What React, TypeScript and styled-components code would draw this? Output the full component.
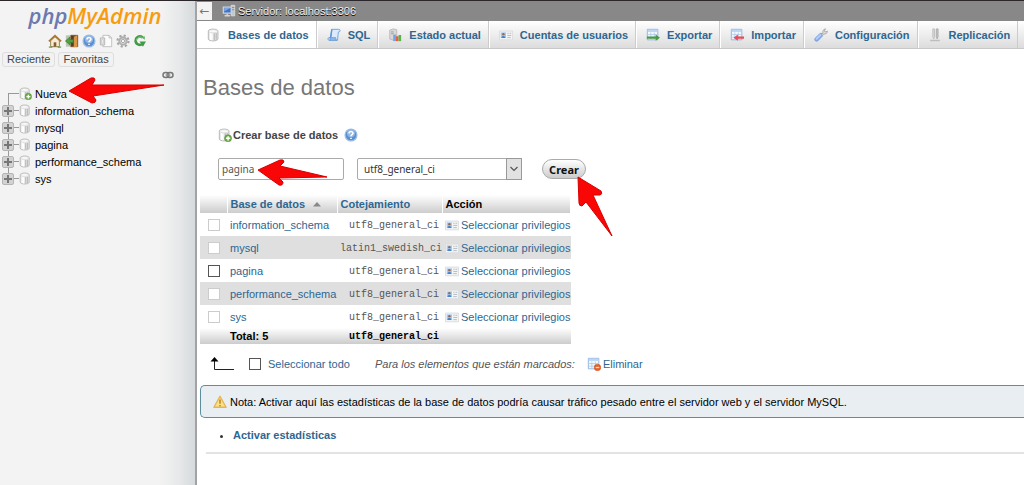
import React from "react";
import styled, { createGlobalStyle, css } from "styled-components";

const GlobalStyle = createGlobalStyle`
  * { box-sizing: border-box; }
  body {
    margin: 0;
    background: #fff;
    color: #333;
    font-family: "Liberation Sans", Arial, sans-serif;
    font-size: 11px;
  }
  a { color: #2e6691; text-decoration: none; }
  svg { display: block; flex: none; }
`;

/* ---------- layout ---------- */

const Page = styled.div`
  display: flex;
  min-height: 100vh;
  border-top: 1px solid #2b262a;
  overflow: hidden;
`;

const Sidebar = styled.aside`
  flex: none;
  width: 197px;
  border-right: 2px solid #a3a3a3;
  background: linear-gradient(to right, #f3f3f3 82%, #e6e8e9 92%, #d6dadc);
`;

const Main = styled.main`
  flex: 1;
  min-width: 0;
`;

/* ---------- sidebar ---------- */

const Logo = styled.a`
  display: block;
  padding-right: 5px;
  height: 31px;
  line-height: 28px;
  text-align: center;
  font-family: "Open Sans", "Noto Sans", sans-serif;
  font-size: 22px;
  font-weight: 600;
  font-style: italic;
  color: #f89c0e;
  span { color: #6c78af; }
`;

const IconBar = styled.div`
  display: flex;
  gap: 3px;
  padding-left: 48px;
  height: 17px;
  align-items: center;
`;

const QuickTabs = styled.div`
  display: flex;
  gap: 3px;
  padding: 3px 0 0 2px;
`;

const QuickTab = styled.button`
  height: 15px;
  padding: 0 4px;
  border: 1px solid #dedede;
  border-radius: 3px;
  background: #f2f2f2;
  color: #444;
  font: 11px/13px "Liberation Sans", Arial, sans-serif;
`;

const LinkToggle = styled.div`
  display: flex;
  justify-content: flex-end;
  padding: 4px 21px 6px 0;
`;

const Tree = styled.ul`
  margin: 0;
  padding: 0 0 0 2px;
  list-style: none;
`;

const TreeItem = styled.li`
  position: relative;
  display: flex;
  align-items: center;
  height: 17px;
  a { color: #000; margin-left: 3px; }
`;

const Branch = styled.span<{ $first?: boolean; $last?: boolean }>`
  display: flex;
  align-items: center;
  width: 17px;
  height: 17px;
  background:
    linear-gradient(#999, #999) 6px 8px / 11px 1px no-repeat,
    linear-gradient(#999, #999) 6px ${(p) => (p.$first ? "8px" : "0")} / 1px
      ${(p) => (p.$last ? "9px" : "17px")} no-repeat;
`;

const Expander = styled.button`
  display: grid;
  place-items: center;
  width: 12px;
  height: 12px;
  padding: 0;
  border: 1px solid #b5b5b5;
  border-radius: 2px;
  background: #d2d2d2;
`;

/* ---------- header ---------- */

const ServerBar = styled.div`
  display: flex;
  align-items: center;
  height: 20px;
  background: #888;
`;

const Collapse = styled.button`
  width: 15px;
  height: 18px;
  padding: 0;
  border: 0;
  background: #f3f3f3;
  color: #777;
  font: 12px/16px "DejaVu Sans", sans-serif;
`;

const ServerLink = styled.a`
  display: flex;
  align-items: center;
  gap: 2px;
  margin-left: 10px;
  color: #eee;
  text-shadow: 0 1px 0 #000;
`;

const Tabs = styled.nav`
  display: flex;
  height: 28px;
  overflow: hidden;
  background: linear-gradient(#fff, #dcdcdc);
  border-bottom: 1px solid #c8c8c8;
`;

const Tab = styled.a<{ $active?: boolean }>`
  display: flex;
  flex: none;
  align-items: center;
  gap: 7px;
  height: 28px;
  padding: 0 7px 0 9px;
  border-right: 1px solid #ccc;
  border-left: 1px solid #fff;
  font-weight: bold;
  white-space: nowrap;
  ${(p) => p.$active && css`background: #fff;`}
`;

/* ---------- content ---------- */

const Content = styled.div`
  padding: 25px 0 30px 3px;
`;

const Title = styled.h2`
  margin: 0;
  padding-left: 3px;
  font-size: 22px;
  line-height: 28px;
  font-weight: normal;
  color: #777;
`;

const Legend = styled.div`
  display: flex;
  align-items: center;
  gap: 1px;
  height: 18px;
  margin-top: 24px;
  padding-left: 18px;
  font-weight: bold;
  color: #444;
  a { margin-left: 5px; }
`;

const CreateForm = styled.form`
  display: flex;
  align-items: center;
  margin: 14px 0 0;
  padding-left: 18px;
`;

const Anchor = styled.div`
  position: relative;
`;

const controlFont = `"Noto Sans", "Open Sans", sans-serif`;

const NameInput = styled.input`
  display: block;
  width: 126px;
  height: 22px;
  padding: 0 3px;
  border: 1px solid #aaa;
  border-radius: 2px;
  background: #fff;
  color: #555;
  font: 10px ${controlFont};
`;

const SelectBox = styled.div`
  position: relative;
  margin: 0 20px 0 13px;
`;

const Collation = styled.select`
  display: block;
  appearance: none;
  width: 165px;
  height: 22px;
  padding: 0 20px 0 6px;
  border: 1px solid #aaa;
  border-radius: 2px;
  background: #fff;
  color: #333;
  font: 10px ${controlFont};
`;

const SelectArrow = styled.span`
  position: absolute;
  top: 0;
  right: 0;
  display: grid;
  place-items: center;
  width: 16px;
  height: 22px;
  border: 1px solid #999;
  background: #e2e2e2;
  pointer-events: none;
`;

const CreateButton = styled.button`
  display: block;
  width: 44px;
  height: 20px;
  padding: 0;
  border: 1px solid #aaa;
  border-radius: 12px;
  background: linear-gradient(#fff, #ccc);
  color: #111;
  font: bold 11px ${controlFont};
`;

const DbTable = styled.table`
  width: 371px;
  margin-top: 15px;
  border-collapse: collapse;
  table-layout: fixed;
  th, td { padding: 0 3px; text-align: left; white-space: nowrap; }
  thead th {
    height: 18px;
    background: linear-gradient(#fff, #ccc);
    border-right: 1px solid #fff;
    color: #000;
  }
  tbody td { height: 23px; }
  tbody tr:nth-child(even) { background: #dfdfdf; }
  tfoot td {
    height: 16px;
    font-weight: bold;
    color: #000;
  }
  tfoot tr { background: linear-gradient(#fff, #ccc); }
  td:first-child { padding-left: 8px; }
`;

const Code = styled.span`
  display: block;
  padding-top: 1px;
  text-align: right;
  font-family: "Liberation Mono", "Courier New", monospace;
  font-size: 10px;
  tbody & { color: #555; }
`;

const Check = styled.input`
  appearance: none;
  display: block;
  flex: none;
  width: 12px;
  height: 12px;
  margin: 0;
  border: 1px solid #555;
  background: #fff;
  &:disabled { border-color: #ccc; }
`;

const SortLink = styled.a`
  display: flex;
  align-items: center;
  gap: 8px;
`;

const IconLink = styled.a`
  display: flex;
  align-items: center;
  gap: 2px;
`;

const BulkRow = styled.div`
  display: flex;
  align-items: center;
  height: 20px;
  margin-top: 10px;
  padding-left: 10px;
  label {
    display: flex;
    align-items: center;
    gap: 7px;
    margin: 0 25px 0 15px;
    color: #2e6691;
  }
  i { margin-right: 12px; color: #555; }
`;

const Notice = styled.div`
  display: flex;
  align-items: center;
  gap: 3px;
  height: 33px;
  margin-top: 11px;
  padding-left: 12px;
  border: 1px solid #5d8f9a;
  border-right: 0;
  border-radius: 5px 0 0 5px;
  background: #e9eef2;
  color: #000;
  white-space: nowrap;
`;

const StatsList = styled.ul`
  margin: 8px 0;
  padding-left: 33px;
  line-height: 18px;
  font-weight: bold;
`;

const Rule = styled.hr`
  margin: 0 0 0 6px;
  border: 0;
  height: 2px;
  background: #e3e3e3;
`;

const Pointer = styled.svg<{ $left: number; $top: number }>`
  position: absolute;
  left: ${(p) => p.$left}px;
  top: ${(p) => p.$top}px;
  z-index: 2;
  pointer-events: none;
  fill: #f90606;
  stroke: #d90000;
  stroke-width: 1;
  stroke-linejoin: round;
`;

/* ---------- icons ---------- */

const Svg = ({ size = 14, children }: { size?: number; children: React.ReactNode }) => (
  <svg width={size} height={size} viewBox="0 0 16 16" fill="none" aria-hidden="true">
    {children}
  </svg>
);

const Cylinder = () => (
  <>
    <path d="M1.500 3.500C1.500 .5 12.500 .5 12.500 3.500v9c0 3-11 3-11 0z" fill="#e9e9e9" stroke="#b0b0b0" />
    <path d="M4 6v7.400M5.600 6.400v7.600" stroke="#fff" strokeWidth="1.400" />
    <path d="M8.300 6v8M10.500 5.800v7.600" stroke="#bdbdbd" strokeWidth="1.500" />
    <ellipse cx="7" cy="3.700" rx="4.800" ry="1.700" fill="#fafafa" stroke="#cfcfcf" strokeWidth=".6" />
  </>
);

const DbIcon = ({ size }: { size?: number }) => <Svg size={size}><Cylinder /></Svg>;

const NewDbIcon = ({ size }: { size?: number }) => (
  <Svg size={size}>
    <Cylinder />
    <circle cx="11.500" cy="11.800" r="4" fill="#6fae4a" stroke="#4b8a2c" strokeWidth=".6" />
    <path d="M11.500 9.400v4.800M9.100 11.800h4.800" stroke="#fff" strokeWidth="1.700" />
  </Svg>
);

const HomeIcon = () => (
  <Svg>
    <path d="M3 7.500v7h10v-7L8 3z" fill="#f6ecd2" stroke="#8f7444" />
    <path d="M1 8.500l7-6.500 7 6.500" stroke="#a8763a" strokeWidth="2" />
    <path d="M6.500 14.500V9.500h3v5z" fill="#8a5a34" />
    <path d="M1 15h4M11 15h4" stroke="#5fa04a" strokeWidth="1.500" />
  </Svg>
);

const ExitIcon = () => (
  <Svg>
    <path d="M6.500 1.500h8v13h-8z" fill="#5a3a20" stroke="#7d5630" />
    <path d="M10 3l4-1.500v13L10 15z" fill="#d9944a" />
    <path d="M1 1.500h5v13H1z" fill="#b9c7b3" />
    <path d="M0.500 8l5-4.500V6.300h4v3.400h-4v2.800z" fill="#4fa142" stroke="#2f7a2a" strokeWidth=".7" />
  </Svg>
);

const HelpIcon = () => (
  <Svg>
    <circle cx="8" cy="8" r="6.800" fill="#5b8fd0" stroke="#9dbde6" strokeWidth="1.400" />
    <circle cx="8" cy="6" r="4.600" fill="#8fb6e6" />
    <path d="M5.800 6.300C5.800 3.300 10.300 3.500 10.200 6c0 1.700-2.200 1.600-2.200 3.400M8 11v1.700" stroke="#fff" strokeWidth="1.800" />
  </Svg>
);

const DocIcon = () => (
  <Svg>
    <path d="M4.500 1.500h7l3 3v10h-10z" fill="#fbfbfb" stroke="#bcbcbc" />
    <path d="M11.500 1.500v3h3" stroke="#bcbcbc" />
    <path d="M1.500 4.500h5v8h-5z" fill="#e9e9e9" stroke="#b0b0b0" />
    <path d="M3 6.500h2v4h-2z" fill="#fff" stroke="#c8c8c8" />
  </Svg>
);

const GearIcon = () => (
  <Svg>
    <circle cx="8" cy="8" r="6.300" stroke="#a4a4a4" strokeWidth="2.400" strokeDasharray="2.470 2.470" />
    <circle cx="8" cy="8" r="4.200" fill="#e2e2e2" stroke="#b0b0b0" strokeWidth="2.400" />
    <circle cx="8" cy="8" r="1.900" fill="#f5f5f5" stroke="#a4a4a4" />
  </Svg>
);

const ReloadIcon = () => (
  <Svg>
    <path d="M11 3.800C7 1.300 3 4 3 7.600c0 4 4.500 6.200 8 3.800" stroke="#3f9b45" strokeWidth="3" />
    <path d="M7.500 8.500h7.300l-3.400 6z" fill="#3f9b45" />
    <path d="M10.800 4.200C7.300 2.200 4 4.500 4 7.500" stroke="#9ad39a" />
    <path d="M9 3.500l4.500-1v4z" fill="#5fb35f" />
  </Svg>
);

const ChainIcon = () => (
  <svg width="12" height="8" viewBox="0 0 12 8" fill="none" aria-hidden="true">
    <rect x="1" y="1.500" width="6" height="5" rx="2.500" stroke="#777" strokeWidth="1.500" />
    <rect x="5" y="1.500" width="6" height="5" rx="2.500" stroke="#777" strokeWidth="1.500" />
    <path d="M3.500 4h5" stroke="#999" />
  </svg>
);

const ServerIcon = () => (
  <Svg>
    <path d="M10.500 1.500h4v12h-4z" fill="#c4c8ce" stroke="#ddd" />
    <path d="M11 4h3M11 6.500h3" stroke="#888" />
    <path d="M1.500 3.500h9v7h-9z" fill="#3f73c4" stroke="#cdd4e0" strokeWidth="1.400" />
    <path d="M2.500 4.500h7l-7 4z" fill="#7fa8e2" />
    <path d="M3 13.500h6M6 11v2" stroke="#d6d6d6" strokeWidth="1.600" />
  </Svg>
);

const SqlIcon = () => (
  <Svg>
    <path d="M5.500 1.500h8c2 0 2 3 0 3H13l-1 9.500H2.500c-2 0-2-3 0-3H4z" fill="#dcebfb" stroke="#6d9fd8" />
    <path d="M2.500 14c2 0 2-3 0-3h7.500c0 2 0 3 1.500 3z" fill="#8fbaf0" stroke="#6d9fd8" />
    <path d="M5.500 1.500L4.200 11" stroke="#5b93d8" strokeWidth="1.600" />
  </Svg>
);

const StatusIcon = () => (
  <Svg>
    <path d="M2 2.500L6 1l4 1v11l-4 1-4-1.500z" fill="#d8d8d8" stroke="#aaa" strokeWidth=".8" />
    <path d="M3.500 4.500h3M3.500 6.500h3" stroke="#999" />
    <path d="M6 7.500h3v7.500h-3z" fill="#6ba4ec" />
    <path d="M9 9.500h3v5.500h-3z" fill="#ef5a3a" />
    <path d="M12 8h3v7h-3z" fill="#59b24c" />
  </Svg>
);

const CardIcon = () => (
  <Svg>
    <path d="M.5 3.500h15v10H.5z" fill="#f4f5f6" stroke="#d8dadc" />
    <path d="M2 5h6v6.500H2z" fill="#a3caf5" />
    <circle cx="5" cy="7" r="1.400" fill="#9a6a48" />
    <path d="M2.800 11.500c0-3 4.400-3 4.400 0z" fill="#4583cf" />
    <path d="M9.500 6h1.500M12 6h2M9.500 8.500h4.500M9.500 11h4" stroke="#aab3bd" />
  </Svg>
);

const Sheet = () => (
  <>
    <path d="M1.500 1.500h12v12h-12z" fill="#f4f9ff" stroke="#86aee0" />
    <path d="M2 2h11v2.500H2z" fill="#bcd5f2" />
    <path d="M2 7.500h11M2 10.500h11M5.500 5v8M9.500 5v8" stroke="#b5cdea" />
  </>
);

const ExportIcon = () => (
  <Svg><Sheet /><path d="M1 9.800h10V7.500l5 3.500-5 3.500v-2.300H1z" fill="#4a9a45" /></Svg>
);

const ImportIcon = () => (
  <Svg><Sheet /><path d="M16 9.800H9V7.500L4 11l5 3.500v-2.300h7z" fill="#ee4a50" /></Svg>
);

const DeleteIcon = () => (
  <Svg>
    <Sheet />
    <circle cx="12" cy="12" r="3.700" fill="#e8652a" stroke="#c44d18" strokeWidth=".6" />
    <path d="M10 12h4" stroke="#fbd9c6" strokeWidth="1.400" />
  </Svg>
);

const WrenchIcon = () => (
  <Svg>
    <path d="M3 13L8 8" stroke="#7ea6e6" strokeWidth="5" strokeLinecap="round" />
    <path d="M3 12.400L7.500 7.900" stroke="#b3ccf6" strokeWidth="2.400" strokeLinecap="round" />
    <path d="M8 8l2.200-2.200C9.500 3.500 11 1 13.200 1L11.700 3.300l1 1.200L15.300 3.600C15.500 6 13 7.500 11 6.800L9 9z" fill="#ddd" stroke="#a5a5a5" />
  </Svg>
);

const ReplicationIcon = () => (
  <Svg>
    <path d="M5.500 1v9l1 2.500 1-2.500V1z" fill="#dadada" stroke="#bbb" />
    <path d="M9.500 1v9l1 2.500 1-2.500V1z" fill="#c4c4c4" stroke="#aaa" />
    <path d="M2.500 14.300h11" stroke="#bdbdbd" strokeWidth="1.700" />
  </Svg>
);

const WarningIcon = () => (
  <Svg>
    <path d="M8 1.500L15 14H1z" fill="#fbe08a" stroke="#e8b450" strokeWidth="1.500" strokeLinejoin="round" />
    <path d="M8 5v5M8 11.300v1.600" stroke="#b5801c" strokeWidth="1.600" />
  </Svg>
);

/* ---------- data ---------- */

const schemas = ["information_schema", "mysql", "pagina", "performance_schema", "sys"];

const tabs = [
  { label: "Bases de datos", icon: <DbIcon />, active: true },
  { label: "SQL", icon: <SqlIcon /> },
  { label: "Estado actual", icon: <StatusIcon /> },
  { label: "Cuentas de usuarios", icon: <CardIcon /> },
  { label: "Exportar", icon: <ExportIcon /> },
  { label: "Importar", icon: <ImportIcon /> },
  { label: "Configuración", icon: <WrenchIcon /> },
  { label: "Replicación", icon: <ReplicationIcon /> },
];

export default function App() {
  return (
    <>
      <GlobalStyle />
      <Page>
        <Sidebar>
          <Logo href="#"><span>php</span>MyAdmin</Logo>
          <IconBar>
            <HomeIcon /><ExitIcon /><HelpIcon /><DocIcon /><GearIcon /><ReloadIcon />
          </IconBar>
          <QuickTabs>
            <QuickTab type="button">Reciente</QuickTab>
            <QuickTab type="button">Favoritas</QuickTab>
          </QuickTabs>
          <LinkToggle><ChainIcon /></LinkToggle>
          <Tree>
            <TreeItem>
              <Branch $first />
              <NewDbIcon size={13} />
              <a href="#">Nueva</a>
              <Pointer $left={66} $top={-9} width="98" height="30" viewBox="0 0 98 30">
                <path d="M1 15L23 2q4-1 4 2l-3 5L96 9 25 20l3 4q0 3-4 3z" />
              </Pointer>
            </TreeItem>
            {schemas.map((name, i) => (
              <TreeItem key={name}>
                <Branch $last={i === schemas.length - 1}>
                  <Expander type="button" aria-label={`Expandir ${name}`}>
                    <svg width="8" height="8" viewBox="0 0 8 8" aria-hidden="true">
                      <path d="M4 0v8M0 4h8" stroke="#777" strokeWidth="2" />
                    </svg>
                  </Expander>
                </Branch>
                <DbIcon size={13} />
                <a href="#">{name}</a>
              </TreeItem>
            ))}
          </Tree>
        </Sidebar>

        <Main>
          <ServerBar>
            <Collapse type="button">←</Collapse>
            <ServerLink href="#"><ServerIcon />Servidor: localhost:3306</ServerLink>
          </ServerBar>
          <Tabs>
            {tabs.map((t) => (
              <Tab key={t.label} href="#" $active={t.active}>{t.icon}{t.label}</Tab>
            ))}
          </Tabs>

          <Content>
            <Title>Bases de datos</Title>
            <Legend>
              <NewDbIcon />
              <label htmlFor="db-name">Crear base de datos</label>
              <a href="#" aria-label="Documentación"><HelpIcon /></a>
            </Legend>
            <CreateForm onSubmit={(e) => e.preventDefault()}>
              <Anchor>
                <NameInput id="db-name" defaultValue="pagina" />
                <Pointer $left={39} $top={0} width="72" height="30" viewBox="0 0 72 30">
                  <path d="M1 12L23 2q4-1 4 2l-4 4 47 11-48 1 4 4q0 4-4 3z" />
                </Pointer>
              </Anchor>
              <SelectBox>
                <Collation aria-label="Cotejamiento" defaultValue="utf8_general_ci">
                  <option>utf8_general_ci</option>
                  <option>latin1_swedish_ci</option>
                </Collation>
                <SelectArrow>
                  <svg width="8" height="6" viewBox="0 0 8 6" fill="none" aria-hidden="true">
                    <path d="M.5 1L4 4.500 7.500 1" stroke="#555" strokeWidth="1.200" />
                  </svg>
                </SelectArrow>
              </SelectBox>
              <Anchor>
                <CreateButton type="submit">Crear</CreateButton>
                <Pointer $left={35} $top={17} width="38" height="62" viewBox="0 0 38 62">
                  <path d="M1 1L24 15q2 3-1 4l-7 0 19 41L9 26l-4 4q-3 0-3-3z" />
                </Pointer>
              </Anchor>
            </CreateForm>

            <DbTable>
              <colgroup>
                <col style={{ width: 27 }} />
                <col style={{ width: 110 }} />
                <col style={{ width: 105 }} />
                <col />
              </colgroup>
              <thead>
                <tr>
                  <th />
                  <th>
                    <SortLink href="#">
                      Base de datos
                      <svg width="8" height="5" viewBox="0 0 8 5" aria-hidden="true">
                        <path d="M4 0l4 4.500H0z" fill="#888" />
                      </svg>
                    </SortLink>
                  </th>
                  <th><a href="#">Cotejamiento</a></th>
                  <th>Acción</th>
                </tr>
              </thead>
              <tbody>
                {schemas.map((name) => (
                  <tr key={name}>
                    <td><Check type="checkbox" aria-label={name} disabled={name !== "pagina"} /></td>
                    <td><a href="#">{name}</a></td>
                    <td><Code>{name === "mysql" ? "latin1_swedish_ci" : "utf8_general_ci"}</Code></td>
                    <td><IconLink href="#"><CardIcon />Seleccionar privilegios</IconLink></td>
                  </tr>
                ))}
              </tbody>
              <tfoot>
                <tr>
                  <td />
                  <td>Total: 5</td>
                  <td><Code>utf8_general_ci</Code></td>
                  <td />
                </tr>
              </tfoot>
            </DbTable>

            <BulkRow>
              <svg width="24" height="14" viewBox="0 0 24 14" fill="none" aria-hidden="true">
                <path d="M4.500 3v9.500H24" stroke="#222" />
                <path d="M4.500 0l4 4.500h-8z" fill="#000" />
              </svg>
              <label><Check type="checkbox" />Seleccionar todo</label>
              <i>Para los elementos que están marcados:</i>
              <IconLink href="#"><DeleteIcon />Eliminar</IconLink>
            </BulkRow>

            <Notice>
              <WarningIcon />
              Nota: Activar aquí las estadísticas de la base de datos podría causar tráfico pesado entre el servidor web y el servidor MySQL.
            </Notice>
            <StatsList>
              <li><a href="#">Activar estadísticas</a></li>
            </StatsList>
            <Rule />
          </Content>
        </Main>
      </Page>
    </>
  );
}
